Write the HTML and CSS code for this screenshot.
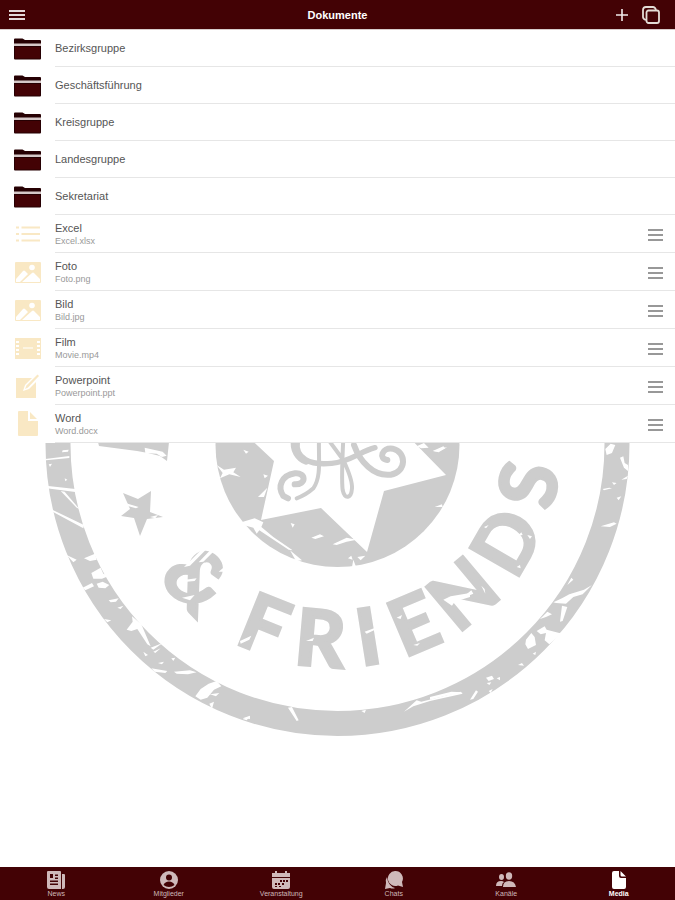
FILE: index.html
```html
<!DOCTYPE html>
<html lang="de">
    <head>
        <meta charset="utf-8" />
        <meta name="viewport" content="width=device-width, initial-scale=1" />
        <title>Dokumente</title>
        <link rel="stylesheet" href="styles.css">
    </head>
    <body>
        <!-- shared icons -->
        <svg class="sprite" aria-hidden="true">
            <symbol id="folder" viewBox="0 0 27 22">
                <path d="M0 1.5Q0 .5 1 .5H8.500L11 2H26Q27 2 27 3V6H0Z" fill="#260003"/>
                <path d="M0 5.500H27V8H0Z" fill="#d5c8c8"/>
                <path d="M0 8H27V20.500Q27 21.500 26 21.500H1Q0 21.500 0 20.500Z" fill="#260003"/>
                <path d="M1 9H26V20.500H1Z" fill="#430205"/>
            </symbol>
            <symbol id="list" viewBox="0 0 27 26">
                <path d="M2 6.500H5M2 13H5M2 19.500H5M7.500 6.500H26M7.500 13H26M7.500 19.500H26" stroke="currentColor" stroke-width="2" fill="none"/>
            </symbol>
            <symbol id="image" viewBox="0 0 27 26">
                <path d="M2 3H26Q27 3 27 4V23Q27 24 26 24H2Q1 24 1 23V4Q1 3 2 3Z" fill="currentColor"/>
                <circle cx="18" cy="8.500" r="2.800" fill="#fff"/>
                <path d="M2 20L9 12Q10 11 11 12L14 15L6 23H2ZM8 23L18 14Q19 13 20 14L26 20V23Z" fill="#fff"/>
            </symbol>
            <symbol id="film" viewBox="0 0 27 26">
                <path d="M1 3H27V24H1Z" fill="currentColor"/>
                <path d="M2 6H5V8H2ZM2 10H5V12H2ZM2 14H5V16H2ZM2 18H5V20H2ZM23 6H26V8H23ZM23 10H26V12H23ZM23 14H26V16H23ZM23 18H26V20H23ZM9 12.500H19V13.500H9Z" fill="#fff"/>
            </symbol>
            <symbol id="edit" viewBox="0 0 27 26">
                <path d="M2 5H22V25H2Z" fill="currentColor"/>
                <path d="M9 18L11 12L20 3L24 7L15 16Z" fill="#fff"/>
                <path d="M11 16L12.500 12.500L23.500 1.500L25 3L14 14.500Z" fill="currentColor"/>
            </symbol>
            <symbol id="file" viewBox="0 0 27 26">
                <path d="M5 0H14V10H24V24Q24 25 23 25H5Q4 25 4 24V1Q4 0 5 0ZM16 1L23 8H16Z" fill="currentColor"/>
            </symbol>
            <symbol id="grip" viewBox="0 0 16 14">
                <path d="M1 2H16M1 7H16M1 12H16" stroke="currentColor" stroke-width="1.500" fill="none"/>
            </symbol>
        </svg>

        <header class="topbar">
            <button class="icon-btn" type="button" aria-label="Menü">
                <svg width="17" height="12" viewBox="0 0 17 12"><path d="M0 2H16M0 6H16M0 10H16" stroke="#e4dada" stroke-width="2"/></svg>
            </button>
            <h1>Dokumente</h1>
            <div class="actions">
                <button class="icon-btn" type="button" aria-label="Hinzufügen">
                    <svg width="12" height="12" viewBox="0 0 12 12"><path d="M0 6H12M6 0V12" stroke="#f0eaea" stroke-width="1.600"/></svg>
                </button>
                <button class="icon-btn" type="button" aria-label="Auswählen">
                    <svg width="18" height="18" viewBox="0 0 18 18" fill="none" stroke="#e4dcd6" stroke-width="1.800"><rect x="4.500" y="4.500" width="12.500" height="12.500" rx="2"/><path d="M4 14Q1 13 1 11V4Q1 1 4 1H11Q13 1 14 4"/></svg>
                </button>
            </div>
        </header>

        <main>
            <!-- club stamp behind the list -->
            <svg class="stamp" viewBox="0 30 675 837" aria-hidden="true">
                <circle cx="337.500" cy="444" r="279.500" fill="none" stroke="#cdcdcd" stroke-width="25"/>
                <circle cx="337.500" cy="445" r="122" fill="#cdcdcd"/>
                <path d="M98 442H169L167 461L160 456L148 453L137 451L99 446Z" fill="#cdcdcd"/>
                <path d="M123 493L138 499L151 491L150 512L163 517L147 519L140 536L134 518L121 516L130 509Z" fill="#cdcdcd"/>
                <path d="M230 420L274 461L261 520L321 508L367 552L384 491L446 475L400 428Z" fill="#fff"/>

                <!-- monogram -->
                <g transform="translate(200 435) scale(.3333)" fill="none" stroke="#cdcdcd" stroke-linecap="round">
                    <path d="M292 20C285 70 330 92 395 85C450 80 480 50 525 38" stroke-width="16"/>
                    <path d="M283 12C275 45 295 72 318 80" stroke-width="18"/>
                    <path d="M357 10C355 70 365 125 340 160Q318 180 290 190" stroke-width="12"/>
                    <path d="M382 10L430 75Q458 135 456 160C454 190 434 196 428 165Q424 130 430 10" stroke-width="12"/>
                    <path d="M462 30C480 80 520 125 572 119C620 112 621 50 578 41C545 36 535 73 562 75" stroke-width="18"/>
                    <path d="M284 148C320 150 319 112 285 115C245 121 231 155 250 183L264 190" stroke-width="18"/>
                </g>

                <g class="lettering">
                    <text x="337.500" y="667" transform="rotate(46 337.500 444)">&amp;</text>
                    <text x="337.500" y="667" transform="rotate(22 337.500 444)">F</text>
                    <text x="337.500" y="667" transform="rotate(5 337.500 444)">R</text>
                    <text x="337.500" y="667" transform="rotate(-9 337.500 444)">I</text>
                    <text x="337.500" y="667" transform="rotate(-23 337.500 444)">E</text>
                    <text x="337.500" y="667" transform="rotate(-40 337.500 444)">N</text>
                    <text x="337.500" y="667" transform="rotate(-60 337.500 444)">D</text>
                    <text x="337.500" y="667" transform="rotate(-78 337.500 444)">S</text>
                </g>

                <!-- scratches, left side -->
                <g transform="translate(30 435) scale(.3333)" fill="#fff">
                    <path d="M46 72L118 63V69L48 76ZM48 152L136 162V171L50 160ZM92 168L104 170L148 222L140 218ZM62 222L162 270L160 280L68 230Z"/>
                    <path d="M98 46L116 44L114 50L96 52ZM104 130L112 134L106 139ZM56 88L66 86L60 96ZM110 360L140 374L130 382ZM162 370L195 356L200 374L180 378Z"/>
                    <path d="M184 414L212 398L220 416L238 422L216 431H190ZM158 458L186 444L192 454L166 466ZM200 446L218 440L238 450L226 460L206 458ZM236 496L266 490L258 500L242 502ZM262 518L280 512L272 522ZM222 552L244 556L232 562Z"/>
                    <path d="M290 584L308 560L306 544L334 568L362 634L352 628L322 582L304 588ZM362 638L398 624L370 644ZM370 650L392 640L376 654ZM340 650L354 660L346 664ZM384 684L402 680L396 688ZM364 700L412 708L406 714L374 710ZM432 710L480 706L500 712L474 718L440 716ZM424 670L436 668L430 678Z"/>
                    <path d="M496 784L512 762L536 746L560 738L574 754L552 764L532 788L512 794ZM538 806L552 800L546 822ZM540 778L568 774L558 784ZM638 850L660 842V852Z"/>
                    <path d="M344 38L398 50L410 62L396 66L380 56L346 54ZM286 204L326 216L318 220L296 214ZM360 246L384 240L376 250Z"/>
                    <path d="M462 396L520 338L530 342L480 392ZM506 382L546 340L556 344L520 380ZM466 434L500 430L494 438L470 440ZM456 488L494 480L480 496ZM566 410L580 398L586 410Z"/>
                </g>

                <!-- scratches, centre -->
                <g transform="translate(200 435) scale(.3333)" fill="#fff">
                    <path d="M50 90L72 104L108 98L100 112L122 126L88 118L60 130L68 114ZM130 44L146 50L138 56ZM174 186L202 158L192 186ZM190 118L204 122L194 130ZM124 262L164 250L190 262L184 276L220 306L278 346L266 344L178 286L170 296L160 278L138 272Z"/>
                    <path d="M272 264L284 268L278 278ZM334 308L360 298L372 304L346 312ZM398 328L440 308L470 314L440 320L410 330ZM444 370L454 362L458 374ZM456 396L460 374L466 390L470 400ZM472 366L496 362L482 376ZM704 216L726 208L728 216ZM650 34L672 24L686 38L664 40ZM700 48L742 36L716 52ZM270 346L306 376L288 378Z"/>
                    <path d="M120 618L154 602L148 614L122 626ZM318 618L342 608L338 618ZM494 590L526 578L522 586L500 596ZM590 548L606 540L602 552ZM640 630L660 624L652 632ZM730 494L752 484L810 474V486L764 500L756 512Z"/>
                    <path d="M264 818L276 816L296 856L290 858ZM128 852L150 844L140 856ZM484 828L498 824L494 834ZM612 830L650 796L664 800L782 770L788 776L690 798L640 814Z"/>
                </g>

                <!-- scratches, right side -->
                <g transform="translate(430 435) scale(.3333)" fill="#fff">
                    <path d="M8 48L40 34L46 40L24 50ZM526 42L542 26L556 30L546 54L530 60ZM570 68L580 64L584 84L594 90V108L582 98ZM518 162L538 158L546 160L522 166ZM560 188L574 184L566 196ZM574 134L594 122L590 132ZM512 274L552 262L560 266L540 276ZM546 142L560 144L552 150Z"/>
                    <path d="M412 450L424 428L430 434ZM370 502L396 490L418 478L462 464L486 450L458 478L430 486L408 506L378 504ZM390 560L396 512L412 516L398 558ZM330 552L352 530L366 538L348 546ZM320 588L344 574L350 584L388 594L400 592L358 628L344 616L348 594L332 598Z"/>
                    <path d="M288 614L304 594L314 606L318 630L294 642L286 628ZM308 656L318 650L316 660ZM264 690L276 684L282 692ZM168 728L186 722L192 732L176 738ZM200 730L210 726V736ZM170 744L184 742L178 750ZM120 794L138 766L144 770L130 792ZM0 786L64 770L98 772L48 782L0 794ZM176 768L188 762L182 774Z"/>
                    <path d="M264 302L274 292L278 300ZM292 300L306 304L300 312ZM260 396L270 390L272 400ZM162 276L176 270L168 280ZM104 482L124 466L130 476L106 486ZM154 452L164 462L166 476Z"/>
                </g>
            </svg>

            <ul class="docs">
                <li class="folder"><svg class="ico"><use href="#folder"/></svg><a href="#">Bezirksgruppe</a></li>
                <li class="folder"><svg class="ico"><use href="#folder"/></svg><a href="#">Geschäftsführung</a></li>
                <li class="folder"><svg class="ico"><use href="#folder"/></svg><a href="#">Kreisgruppe</a></li>
                <li class="folder"><svg class="ico"><use href="#folder"/></svg><a href="#">Landesgruppe</a></li>
                <li class="folder"><svg class="ico"><use href="#folder"/></svg><a href="#">Sekretariat</a></li>
                <li class="doc">
                    <svg class="ico"><use href="#list"/></svg>
                    <div class="row"><a href="#">Excel<small>Excel.xlsx</small></a>
                    <button class="grip" type="button" aria-label="Excel verschieben"><svg><use href="#grip"/></svg></button></div>
                </li>
                <li class="doc">
                    <svg class="ico"><use href="#image"/></svg>
                    <div class="row"><a href="#">Foto<small>Foto.png</small></a>
                    <button class="grip" type="button" aria-label="Foto verschieben"><svg><use href="#grip"/></svg></button></div>
                </li>
                <li class="doc">
                    <svg class="ico"><use href="#image"/></svg>
                    <div class="row"><a href="#">Bild<small>Bild.jpg</small></a>
                    <button class="grip" type="button" aria-label="Bild verschieben"><svg><use href="#grip"/></svg></button></div>
                </li>
                <li class="doc">
                    <svg class="ico"><use href="#film"/></svg>
                    <div class="row"><a href="#">Film<small>Movie.mp4</small></a>
                    <button class="grip" type="button" aria-label="Film verschieben"><svg><use href="#grip"/></svg></button></div>
                </li>
                <li class="doc">
                    <svg class="ico"><use href="#edit"/></svg>
                    <div class="row"><a href="#">Powerpoint<small>Powerpoint.ppt</small></a>
                    <button class="grip" type="button" aria-label="Powerpoint verschieben"><svg><use href="#grip"/></svg></button></div>
                </li>
                <li class="doc">
                    <svg class="ico"><use href="#file"/></svg>
                    <div class="row"><a href="#">Word<small>Word.docx</small></a>
                    <button class="grip" type="button" aria-label="Word verschieben"><svg><use href="#grip"/></svg></button></div>
                </li>
            </ul>
        </main>

        <nav class="tabs">
            <a href="#">
                <svg viewBox="0 0 20 20"><path d="M2 1H14Q15 1 15 2V19H3Q1 19 1 17V2Q1 1 2 1ZM16 4H18Q19 4 19 5V17Q19 19 17 19H16Z" fill="currentColor"/><path d="M4 4H7V8H4ZM9 4.500H12V6H9ZM9 7.500H12V9H9ZM4 10.500H12V12H4ZM4 13.500H12V15H4Z" fill="#430205"/></svg>
                <span>News</span>
            </a>
            <a href="#">
                <svg viewBox="0 0 20 20"><circle cx="10" cy="10" r="9" fill="currentColor"/><circle cx="10" cy="7.500" r="3" fill="#430205"/><path d="M4.500 15Q6 11.500 10 11.500T15.500 15Q13 17 10 17T4.500 15Z" fill="#430205"/></svg>
                <span>Mitglieder</span>
            </a>
            <a href="#">
                <svg viewBox="0 0 20 20"><path d="M1 3H4V1H6V3H14V1H16V3H19V7H1ZM1 8H19V17Q19 19 17 19H3Q1 19 1 17Z" fill="currentColor"/><path d="M12 10H14V12H12ZM15 10H17V12H15ZM9 10H11V12H9ZM4 13H6V15H4ZM7 13H9V15H7ZM11 13H13V15H11ZM4 16H6V17H4ZM8 16H10V17H8Z" fill="#430205"/></svg>
                <span>Veranstaltung</span>
            </a>
            <a href="#">
                <svg viewBox="0 0 20 20"><path d="M3 7Q1 10 2 13L1 19L6 18Q9 19 11 18Q4 16 3 7Z" fill="currentColor"/><path d="M11 1A7.500 7.500 0 0 1 18 12L19 17L14 15.500A7.500 7.500 0 1 1 11 1Z" fill="currentColor"/></svg>
                <span>Chats</span>
            </a>
            <a href="#">
                <svg viewBox="0 0 20 20" fill="currentColor"><ellipse cx="13" cy="6" rx="3.200" ry="3.700"/><ellipse cx="5.500" cy="7" rx="2.500" ry="3"/><path d="M7 17Q7 11 13 11T20 17ZM0 16Q0 11 5 11Q7 11 8 12Q6 13 6 16Z"/></svg>
                <span>Kanäle</span>
            </a>
            <a href="#" class="active" aria-current="page">
                <svg viewBox="0 0 20 20"><path d="M5 1H10V6Q10 8 12 8H17V17Q17 19 15 19H5Q3 19 3 17V3Q3 1 5 1ZM11.500 1L17 6.500H13Q11.500 6.500 11.500 5Z" fill="currentColor"/></svg>
                <span>Media</span>
            </a>
        </nav>
    </body>
</html>
```

FILE: styles.css
```css
* {
    box-sizing: border-box;
    margin: 0;
    padding: 0;
}

body {
    display: flex;
    flex-direction: column;
    min-height: 100vh;
    background: #fff;
    color: #555;
    font-family: "Liberation Sans", Arial, sans-serif;
    font-size: 11px;
}

a {
    color: inherit;
    text-decoration: none;
}

button {
    border: 0;
    background: none;
    cursor: pointer;
}

svg {
    display: block;
}

.sprite {
    position: absolute;
    width: 0;
    height: 0;
}

/* top bar */
.topbar {
    display: grid;
    grid-template-columns: 1fr auto 1fr;
    align-items: center;
    height: 30px;
    padding: 0 9px;
    background: #430205;
    border-bottom: 1px solid #d8cccc;
}

.topbar h1 {
    color: #fff;
    font-size: 11px;
    line-height: 16px;
}

.icon-btn {
    justify-self: start;
}

.actions {
    display: flex;
    align-items: center;
    justify-content: flex-end;
    gap: 14px;
    padding-right: 6px;
}

/* document list */
main {
    position: relative;
    flex: 1;
}

.stamp {
    position: absolute;
    width: 100%;
    height: 100%;
}

.lettering {
    fill: #cdcdcd;
    stroke: #cdcdcd;
    stroke-width: 3px;
    font-family: Lato, sans-serif;
    font-size: 78px;
    font-weight: bold;
    text-anchor: middle;
}

.docs {
    position: relative;
    background: #fff;
    list-style: none;
}

.docs li {
    display: flex;
    align-items: center;
    gap: 14px;
    padding-left: 14px;
}

.ico {
    flex: none;
    width: 27px;
    height: 26px;
    color: #f9e8c4;
}

.folder .ico {
    height: 22px;
}

.folder a,
.row {
    display: flex;
    flex: 1;
    align-items: center;
    border-bottom: 1px solid #e6e6e6;
}

.folder a {
    height: 37px;
}

.row {
    height: 38px;
    padding: 2px 12px 0 0;
}

.row a {
    flex: 1;
    line-height: 13px;
}

.row small {
    display: block;
    color: #999;
    font-size: 9px;
    line-height: 12px;
}

.grip {
    color: #777;
}

.grip svg {
    width: 16px;
    height: 14px;
}

/* bottom tabs */
.tabs {
    display: flex;
    height: 33px;
    background: #430205;
}

.tabs a {
    display: flex;
    flex: 1;
    flex-direction: column;
    align-items: center;
    padding-top: 3px;
    color: #cfb9ba;
    font-size: 7px;
    line-height: 8px;
}

.tabs svg {
    width: 20px;
    height: 20px;
}

.tabs .active {
    color: #fff;
    font-weight: bold;
}
```
